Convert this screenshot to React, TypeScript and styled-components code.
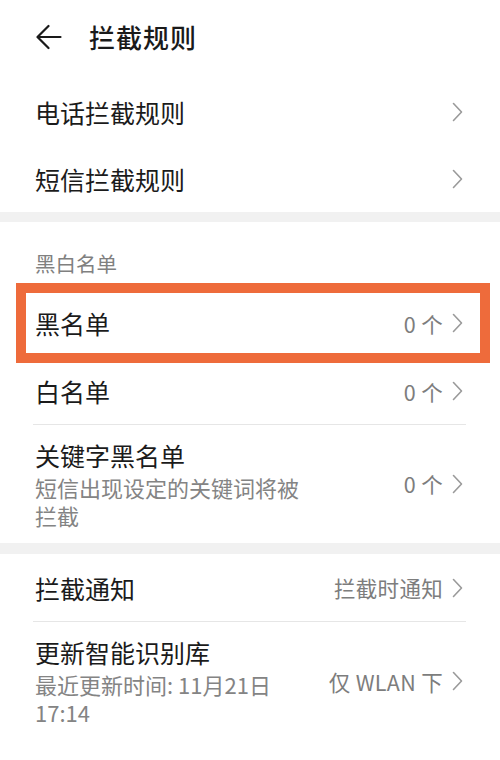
import React from "react";
import styled, { createGlobalStyle, css } from "styled-components";

const Global = createGlobalStyle`
  html, body { margin: 0; padding: 0; background: #ffffff; }
  body { font-family: "Noto Sans CJK SC", "Noto Sans", sans-serif; color: #1b1b1b; }
`;

const Page = styled.div`
  width: 500px;
  min-height: 760px;
  background: #ffffff;
  display: flex;
  flex-direction: column;
`;

const Header = styled.header`
  height: 78px;
  display: flex;
  align-items: center;
  padding: 0 0 4px 36px;
  box-sizing: border-box;
  gap: 27px;
`;

const Title = styled.h1`
  margin: 0;
  font-size: 26px;
  font-weight: 500;
  line-height: 1;
  letter-spacing: 1px;
  color: #1a1a1a;
`;

const Section = styled.section`
  display: flex;
  flex-direction: column;
`;

const Band = styled.div<{ $h: number }>`
  height: ${(p) => p.$h}px;
  background: #f1f1f1;
`;

const SectionLabel = styled.div`
  height: 61px;
  box-sizing: border-box;
  padding: 28px 0 0 35px;
  font-size: 20.5px;
  line-height: 26px;
  color: #808080;
`;

const Row = styled.div<{ $h: number; $highlight?: boolean; $divider?: boolean; $lift?: number }>`
  position: relative;
  height: ${(p) => p.$h}px;
  box-sizing: border-box;
  padding: 0 37px ${(p) => p.$lift ?? 0}px 35px;
  display: flex;
  align-items: center;
  justify-content: space-between;
  gap: 16px;
  ${(p) =>
    p.$divider &&
    css`
      &::before {
        content: "";
        position: absolute;
        top: 0;
        left: 33px;
        right: 34px;
        height: 1px;
        background: #e6e6e6;
      }
    `}
  ${(p) =>
    p.$highlight &&
    css`
      &::after {
        content: "";
        position: absolute;
        top: 0;
        bottom: 0;
        left: 16px;
        right: 10px;
        border: 10px solid #ee6b3b;
        pointer-events: none;
      }
    `}
`;

const Texts = styled.div`
  display: flex;
  flex-direction: column;
  min-width: 0;
`;

const Main = styled.div`
  font-size: 25px;
  line-height: 32px;
  color: #1b1b1b;
`;

const Sub = styled.div`
  font-size: 22px;
  line-height: 28px;
  color: #848484;
  max-width: 272px;
  margin-top: 2px;
`;

const Right = styled.div`
  display: flex;
  align-items: center;
  gap: 9px;
  flex-shrink: 0;
`;

const Value = styled.span`
  font-size: 21.5px;
  color: #7d7d7d;
  white-space: pre;
  letter-spacing: 0.3px;
`;

const Chevron = () => (
  <svg width="11" height="20" viewBox="0 0 11 20" fill="none">
    <path d="M1.5 1.5 L9.5 10 L1.5 18.5" stroke="#9a9a9a" strokeWidth="1.6" strokeLinecap="round" strokeLinejoin="round" />
  </svg>
);

const BackArrow = () => (
  <svg width="26" height="26" viewBox="0 0 26 26" fill="none">
    <path d="M24.5 13 H2 M12.5 2 L1.5 13 L12.5 24" stroke="#1a1a1a" strokeWidth="2.2" strokeLinecap="round" strokeLinejoin="round" />
  </svg>
);

type Item = {
  title: string;
  sub?: string;
  value?: string;
  h: number;
  highlight?: boolean;
  divider?: boolean;
  lift?: number;
};

const ListRow = ({ title, sub, value, h, highlight, divider, lift }: Item) => (
  <Row $h={h} $highlight={highlight} $divider={divider} $lift={lift}>
    <Texts>
      <Main>{title}</Main>
      {sub && <Sub>{sub}</Sub>}
    </Texts>
    <Right>
      {value && <Value>{value}</Value>}
      <Chevron />
    </Right>
  </Row>
);

export default function App() {
  return (
    <Page>
      <Global />
      <Header>
        <BackArrow />
        <Title>拦截规则</Title>
      </Header>
      <Section>
        <ListRow title="电话拦截规则" h={67} />
        <ListRow title="短信拦截规则" h={67} />
      </Section>
      <Band $h={10} />
      <Section>
        <SectionLabel>黑白名单</SectionLabel>
        <ListRow title="黑名单" value="0 个" h={80} highlight />
        <ListRow title="白名单" value="0 个" h={61} lift={5} />
        <ListRow
          title="关键字黑名单"
          sub="短信出现设定的关键词将被拦截"
          value="0 个"
          h={119}
          divider
        />
      </Section>
      <Band $h={11} />
      <Section>
        <ListRow title="拦截通知" value="拦截时通知" h={67} />
        <ListRow
          title="更新智能识别库"
          sub="最近更新时间: 11月21日 17:14"
          value="仅 WLAN 下"
          h={120}
          divider
        />
      </Section>
    </Page>
  );
}
